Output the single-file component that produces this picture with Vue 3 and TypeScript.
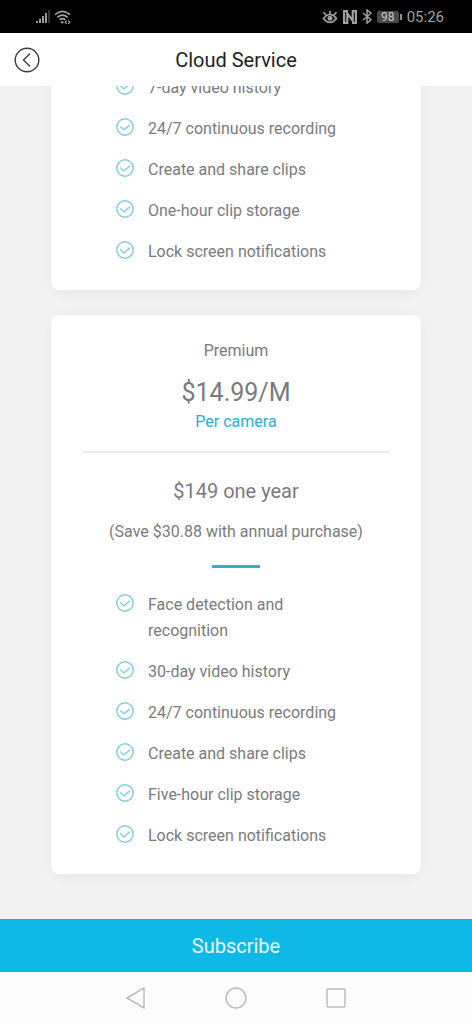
<script setup lang="ts">
interface Plan {
  name: string
  monthly: string
  unit: string
  yearly: string
  saving: string
  features: string[]
}

const basicFeatures: string[] = [
  '7-day video history',
  '24/7 continuous recording',
  'Create and share clips',
  'One-hour clip storage',
  'Lock screen notifications',
]

const premium: Plan = {
  name: 'Premium',
  monthly: '$14.99/M',
  unit: 'Per camera',
  yearly: '$149 one year',
  saving: '(Save $30.88 with annual purchase)',
  features: [
    'Face detection and recognition',
    '30-day video history',
    '24/7 continuous recording',
    'Create and share clips',
    'Five-hour clip storage',
    'Lock screen notifications',
  ],
}
</script>

<template>
  <div class="screen">
    <div class="status">
      <div class="status-group left">
        <svg width="16" height="14" viewBox="0 0 16 14" fill="#9a9a9a">
          <rect x="0" y="11" width="2" height="2" />
          <rect x="3" y="9" width="2" height="4" />
          <rect x="6" y="6" width="2" height="7" />
          <rect x="9" y="3" width="2" height="10" />
          <rect x="12" y="0" width="2" height="13" fill="#333" />
        </svg>
        <svg width="18" height="14" viewBox="0 0 18 14" fill="none" stroke="#a4a4a4" stroke-width="1.7">
          <path d="M1 4.6Q8.500-2 16 4.600" />
          <path d="M3.400 7.300Q8.500 2.800 13.600 7.300" />
          <path d="M5.600 9.800Q8.500 7.300 11.400 9.800" />
          <circle cx="8.200" cy="12.200" r="1.200" fill="#a4a4a4" stroke="none" />
          <path d="M12.800 10.600L11.200 12.200L12.800 13.800M14.200 10.600L15.800 12.200L14.200 13.800" stroke-width="1.200" />
        </svg>
      </div>
      <div class="status-group right">
        <svg width="16" height="14" viewBox="0 0 16 14" fill="none" stroke="#a0a0a0" stroke-width="1.700">
          <path d="M1.500 8.400Q4.500 4.500 8 4.500T14.500 8.400Q11.500 12.300 8 12.300T1.500 8.400Z" />
          <path d="M8 4.500V1M4.200 5.200L1.500 2.200M11.800 5.200L14.500 2.200" />
          <circle cx="8" cy="8.200" r="2.500" fill="#a0a0a0" stroke="none" />
        </svg>
        <svg width="14" height="14" viewBox="0 0 14 14" fill="none" stroke="#a0a0a0" stroke-width="2.200">
          <path d="M5 1.100H1.100V12.900H4.300V3.200L9.700 10.800V1.100H12.900V12.900H9" />
        </svg>
        <svg width="10" height="15" viewBox="0 0 10 15" fill="none" stroke="#a0a0a0" stroke-width="1.500">
          <path d="M1 4L9 10.800L5 14V1L9 4.200L1 11" />
        </svg>
        <span class="battery">98</span>
        <span class="clock">05:26</span>
      </div>
    </div>

    <header class="header">
      <button class="back" type="button" aria-label="Back">
        <svg width="26" height="26" viewBox="0 0 26 26" fill="none" stroke="#3c3c3c" stroke-width="1.400">
          <circle cx="13" cy="13" r="11.800" />
          <path d="M16 6.500L9.500 13L16 19.500" />
        </svg>
      </button>
      <h1>Cloud Service</h1>
    </header>

    <main class="plans">
      <section class="card">
        <ul class="features">
          <li v-for="feature in basicFeatures" :key="feature">
            <svg class="tick" viewBox="0 0 18 18">
              <circle cx="9" cy="9" r="8.200" />
              <path d="M4.300 8.600L8 11.900L14 6.800" />
            </svg>
            <span>{{ feature }}</span>
          </li>
        </ul>
      </section>

      <section class="card">
        <h2>{{ premium.name }}</h2>
        <p class="price">{{ premium.monthly }}</p>
        <p class="unit">{{ premium.unit }}</p>
        <hr />
        <p class="yearly">{{ premium.yearly }}</p>
        <p class="saving">{{ premium.saving }}</p>
        <div class="accent"></div>
        <ul class="features">
          <li v-for="feature in premium.features" :key="feature">
            <svg class="tick" viewBox="0 0 18 18">
              <circle cx="9" cy="9" r="8.200" />
              <path d="M4.300 8.600L8 11.900L14 6.800" />
            </svg>
            <span>{{ feature }}</span>
          </li>
        </ul>
      </section>
    </main>

    <button class="subscribe" type="button">Subscribe</button>

    <nav class="system-nav">
      <button type="button" aria-label="Back">
        <svg width="22" height="22" viewBox="0 0 22 22"><path d="M2 11L19 1V21Z" /></svg>
      </button>
      <button type="button" aria-label="Home">
        <svg width="22" height="22" viewBox="0 0 22 22"><circle cx="11" cy="11" r="10" /></svg>
      </button>
      <button type="button" aria-label="Recent apps">
        <svg width="22" height="22" viewBox="0 0 22 22"><rect x="2" y="2" width="18" height="18" rx="1" /></svg>
      </button>
    </nav>
  </div>
</template>

<style>
body {
  margin: 0;
}
</style>

<style scoped>
.screen {
  display: flex;
  flex-direction: column;
  height: 100vh;
  background: #f3f3f3;
  color: #7a7b7e;
  font-family: Roboto, "Liberation Sans", sans-serif;
  font-size: 16px;
  line-height: 26px;
}

button {
  padding: 0;
  border: 0;
  background: none;
  font: inherit;
  cursor: pointer;
}

svg {
  display: block;
  flex: none;
}

h1,
h2,
p,
ul {
  margin: 0;
  padding: 0;
  font-size: 16px;
  font-weight: 400;
}

.status {
  display: flex;
  flex: none;
  align-items: center;
  justify-content: space-between;
  height: 33px;
  padding: 0 28px 0 36px;
  background: #000;
  color: #a0a0a0;
}

.status-group {
  display: flex;
  align-items: center;
}

.left {
  gap: 2px;
}

.right {
  gap: 5px;
}

.battery {
  position: relative;
  width: 22px;
  height: 12px;
  border-radius: 2px;
  background: #484848;
  color: #c8c8c8;
  font-size: 12px;
  line-height: 12px;
  text-align: center;
}

.battery::after {
  content: "";
  position: absolute;
  top: 3px;
  right: -3px;
  width: 2px;
  height: 6px;
  background: #8c8c8c;
}

.clock {
  margin-left: 3px;
  font-size: 15px;
}

.header {
  display: grid;
  flex: none;
  grid-template-columns: 26px 1fr 26px;
  align-items: center;
  height: 53px;
  padding: 0 14px;
  background: #fff;
}

.header h1 {
  color: #222;
  font-size: 20px;
  text-align: center;
}

.plans {
  display: flex;
  flex: 1;
  flex-direction: column;
  justify-content: flex-end;
  gap: 25px;
  min-height: 0;
  padding: 0 51px 45px;
  overflow: hidden;
}

.card {
  flex: none;
  padding: 23px 32px 25px;
  border-radius: 8px;
  background: #fff;
  box-shadow: 0 2px 16px rgba(0, 0, 0, 0.06);
  text-align: center;
}

.price {
  margin-top: 13px;
  font-size: 25px;
  line-height: 32px;
}

.unit {
  color: #2bb0cf;
}

hr {
  height: 2px;
  margin: 16px 0 24px;
  border: 0;
  background: #ebebeb;
}

.yearly {
  margin-bottom: 14px;
  font-size: 20px;
  line-height: 28px;
}

.accent {
  width: 48px;
  height: 3px;
  margin: 20px auto 24px;
  background: #30b1d2;
}

.features {
  display: flex;
  flex-direction: column;
  gap: 15px;
  padding: 0 32px 0 33px;
  list-style: none;
  text-align: left;
}

.features li {
  display: flex;
  gap: 14px;
}

.tick {
  width: 18px;
  height: 18px;
  margin-top: 2px;
  fill: none;
  stroke: #7dcddd;
  stroke-width: 1.4;
}

.subscribe {
  flex: none;
  height: 53px;
  background: #0eb9e5;
  color: #e8faff;
  font-size: 20px;
}

.system-nav {
  display: flex;
  flex: none;
  align-items: center;
  justify-content: center;
  gap: 78px;
  height: 52px;
  background: #fcfcfc;
}

.system-nav svg {
  fill: none;
  stroke: #bcbcbc;
  stroke-width: 1.5;
}
</style>
